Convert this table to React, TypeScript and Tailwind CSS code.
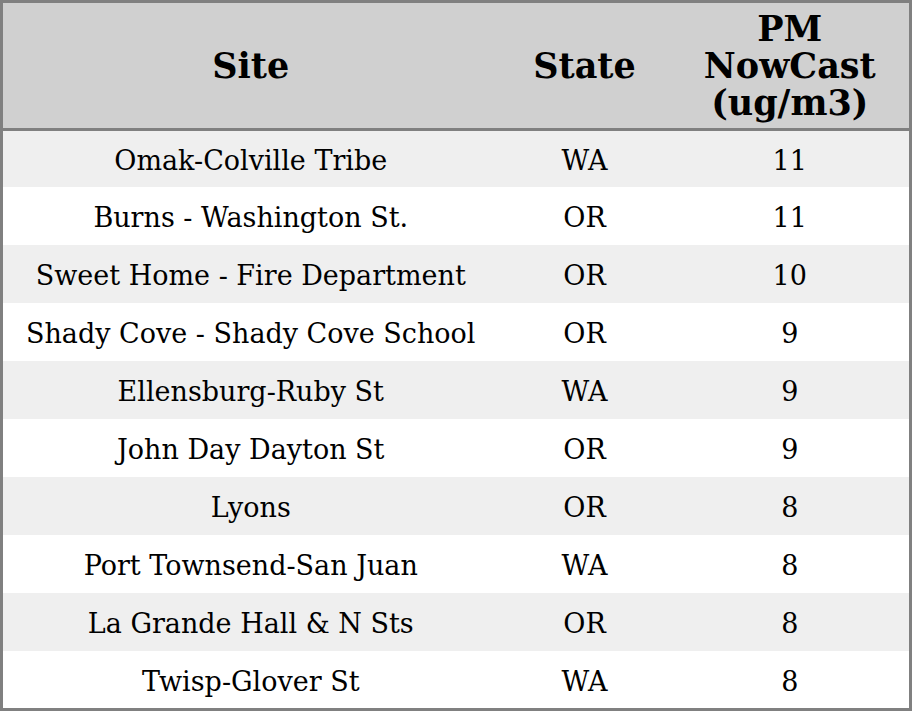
const rows: [string, string, number][] = [
  ["Omak-Colville Tribe", "WA", 11],
  ["Burns - Washington St.", "OR", 11],
  ["Sweet Home - Fire Department", "OR", 10],
  ["Shady Cove - Shady Cove School", "OR", 9],
  ["Ellensburg-Ruby St", "WA", 9],
  ["John Day Dayton St", "OR", 9],
  ["Lyons", "OR", 8],
  ["Port Townsend-San Juan", "WA", 8],
  ["La Grande Hall & N Sts", "OR", 8],
  ["Twisp-Glover St", "WA", 8],
];

function rowClass(i: number) {
  const bg = i % 2 === 0 ? "bg-[#efefef]" : "bg-white";
  if (i === 0) return `h-[57px] ${bg}`;
  if (i === rows.length - 1) return `h-[59px] ${bg}`;
  return `h-[58px] ${bg}`;
}

export default function App() {
  return (
    <div className="w-[912px] h-[711px] overflow-hidden bg-white font-['DejaVu_Serif',serif] text-black">
      <table className="w-[912px] border-collapse border-[3px] border-[#808080] text-center">
        <thead>
          <tr className="h-[128px] bg-[#d0d0d0] border-b-[3px] border-[#808080]">
            <th className="w-[497px] p-0 text-[35px] leading-[37px] font-bold">Site</th>
            <th className="w-[172px] p-0 text-[35px] leading-[37px] font-bold">State</th>
            <th className="p-0 text-[35px] leading-[37px] font-bold">
              PM
              <br />
              NowCast
              <br />
              (ug/m3)
            </th>
          </tr>
        </thead>
        <tbody>
          {rows.map(([site, state, pm], i) => (
            <tr key={site} className={rowClass(i)}>
              <td className="p-0 pt-[5px] text-[27px]">{site}</td>
              <td className="p-0 pt-[5px] text-[27px]">{state}</td>
              <td className="p-0 pt-[5px] text-[27px]">{pm}</td>
            </tr>
          ))}
        </tbody>
      </table>
    </div>
  );
}
